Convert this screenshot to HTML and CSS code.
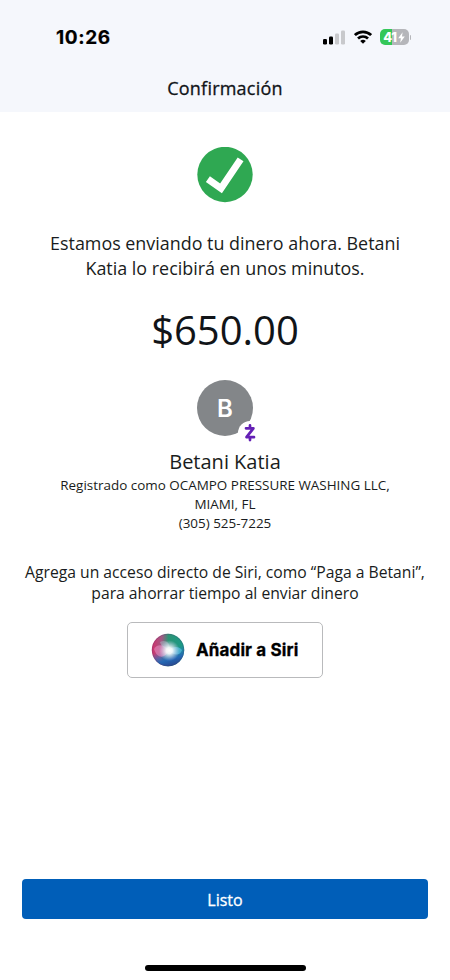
FILE: index.html
```html
<!DOCTYPE html>
<html lang="es">
<head>
<meta charset="utf-8">
<title>Confirmación</title>
<link rel="stylesheet" href="styles.css">
</head>
<body>
<div class="screen">
  <header class="top">
    <div class="status">
      <span class="time">10:26</span>
      <div class="indicators">
        <svg class="signal" width="22" height="15" viewBox="0 0 22 15">
          <rect x="0" y="9" width="4" height="5.5" rx="1.2" fill="#000"/>
          <rect x="6" y="6.5" width="4" height="8" rx="1.2" fill="#000"/>
          <rect x="12" y="3.5" width="4" height="11" rx="1.2" fill="#c8c9cc"/>
          <rect x="18" y="0.5" width="4" height="14" rx="1.2" fill="#c8c9cc"/>
        </svg>
        <svg class="wifi" width="18" height="14" viewBox="0 0 18 14">
          <g fill="none" stroke="#000" stroke-width="2.7">
            <path d="M0.9 5.1a11.6 11.6 0 0 1 16.2 0"/>
            <path d="M4 8.5a7.2 7.2 0 0 1 10 0"/>
          </g>
          <path d="M9 13.8 6.2 11a4 4 0 0 1 5.6 0z"/>
        </svg>
        <div class="battery">
          <span class="level">41</span>
          <svg width="7" height="11" viewBox="0 0 7 11"><path d="M4.6 0.3 0.2 6.2h2.7L2.2 10.7 6.8 4.6H4z" fill="#fff"/></svg>
        </div>
        <span class="cap"></span>
      </div>
    </div>
    <h1>Confirmación</h1>
  </header>
  <main>
    <svg class="check" width="56" height="56" viewBox="0 0 56 56">
      <circle cx="28" cy="27.5" r="27.7" fill="#2fa852"/>
      <path d="M10.9 32.2 24 41.4 43.6 12.4" fill="none" stroke="#fff" stroke-width="7"/>
    </svg>
    <p class="message">Estamos enviando tu dinero ahora. Betani<br>Katia lo recibirá en unos minutos.</p>
    <p class="amount">$650.00</p>
    <div class="avatar">B
      <span class="badge">
        <svg width="12" height="18" viewBox="0 0 12 18"><path d="M2 4.3h7.4L2.5 13.2H10M6 1.4v2.9M6 13.2v2.9" fill="none" stroke="#6420b5" stroke-width="2.7" stroke-linecap="round" stroke-linejoin="round"/></svg>
      </span>
    </div>
    <h2>Betani Katia</h2>
    <p class="details">Registrado como OCAMPO PRESSURE WASHING LLC,<br>MIAMI, FL<br>(305) 525-7225</p>
    <p class="hint">Agrega un acceso directo de Siri, como “Paga a Betani”,<br>para ahorrar tiempo al enviar dinero</p>
    <button class="siri">
      <svg width="34" height="34" viewBox="0 0 34 34">
        <defs>
          <linearGradient id="orb" x1="0" y1="0.35" x2="1" y2="0.4">
            <stop offset="0" stop-color="#d52f6b"/><stop offset="0.3" stop-color="#a05a84"/><stop offset="0.5" stop-color="#2c9474"/><stop offset="1" stop-color="#189b88"/>
          </linearGradient>
          <linearGradient id="base" x1="0.3" y1="0" x2="0.6" y2="1">
            <stop offset="0.5" stop-color="#2878ca" stop-opacity="0"/><stop offset="0.8" stop-color="#2468b4"/><stop offset="1" stop-color="#28488f"/>
          </linearGradient>
          <radialGradient id="glow" cx="0.54" cy="0.52" r="0.32">
            <stop offset="0" stop-color="#fff"/><stop offset="0.3" stop-color="#fff" stop-opacity="0.9"/><stop offset="1" stop-color="#dcd4ff" stop-opacity="0"/>
          </radialGradient>
        </defs>
        <circle cx="17" cy="17" r="16.2" fill="url(#orb)"/>
        <circle cx="17" cy="17" r="16.2" fill="url(#base)"/>
        <path d="M3 16C7 10 13 12 18 17 14 26 6 26 3 16z" fill="#e88cc0" opacity="0.6"/>
        <path d="M17 17c5-4 11-4 14 0-2 6-8 6-14 0z" fill="#61c9ed" opacity="0.6"/>
        <path d="M9 9c6-3 11 1 9 8-5-1-8-4-9-8z" fill="#a9b9c4" opacity="0.5"/>
        <circle cx="17" cy="17" r="16.2" fill="url(#glow)"/>
        <circle cx="17" cy="17" r="15.8" fill="none" stroke="#4c3f70" stroke-width="0.8" opacity="0.35"/>
      </svg>
      <span>Añadir a Siri</span>
    </button>
  </main>
  <footer>
    <button class="done">Listo</button>
    <div class="home"></div>
  </footer>
</div>
</body>
</html>
```

FILE: styles.css
```css
* { box-sizing: border-box; margin: 0; padding: 0; }
body { background: #fff; color: #191c20; font-family: "Open Sans", sans-serif; }
.screen { width: 450px; height: 980px; display: flex; flex-direction: column; overflow: hidden; }
.top { height: 112px; background: #f5f7fc; flex: none; }
.status { height: 74px; padding: 0 39px 0 56px; display: flex; align-items: center; justify-content: space-between; }
.time { padding-top: 1px; font: 700 19px/24px Inter, sans-serif; letter-spacing: 0.6px; color: #000; -webkit-text-stroke: 0.2px #000; }
.indicators { display: flex; align-items: center; }
.wifi { margin: 0 8px 0 9px; }
.battery { width: 29px; height: 16px; border-radius: 5px; background: linear-gradient(90deg, #34c759 0 12px, #b5b6ba 12px); display: flex; align-items: center; justify-content: center; gap: 1px; }
.level { font: 800 13px/16px Inter, sans-serif; color: #fff; letter-spacing: -0.2px; }
.cap { width: 1.5px; height: 5px; margin-left: 1px; border-radius: 0 2px 2px 0; background: #b5b6ba; }
h1 { font-size: 18px; line-height: 28px; font-weight: 400; letter-spacing: 0.22px; text-align: center; color: #111418; -webkit-text-stroke: 0.3px #111418; }
main { flex: 1; display: flex; flex-direction: column; align-items: center; text-align: center; padding-top: 35px; white-space: nowrap; }
.check { flex: none; }
.message { margin-top: 28px; font-size: 17.9px; line-height: 24.5px; }
.amount { margin-top: 22px; font-size: 40px; line-height: 56px; color: #111418; }
.avatar { position: relative; flex: none; width: 56px; height: 56px; margin-top: 22px; border-radius: 50%; background: #838689; color: #fff; font: 600 24px/58px Inter, sans-serif; }
.badge { position: absolute; left: 41px; top: 41px; width: 24px; height: 24px; border-radius: 50%; background: #fff; display: flex; align-items: center; justify-content: center; }
h2 { margin-top: 12px; font-size: 20px; line-height: 28px; font-weight: 400; }
.details { font-size: 13.45px; line-height: 19px; }
.hint { margin-top: 29px; font-size: 15.7px; line-height: 21px; }
.siri { margin-top: 18px; width: 196px; height: 56px; border: 1px solid #b9babc; border-radius: 5px; background: #fff; display: flex; align-items: center; padding-left: 23px; gap: 11px; font: 700 17px/24px Inter, sans-serif; letter-spacing: 0.13px; color: #000; -webkit-text-stroke: 0.3px #000; }
footer { flex: none; height: 101px; padding: 0 22px; display: flex; flex-direction: column; align-items: center; }
.done { width: 406px; height: 40px; border: 0; border-radius: 4px; background: #005eb8; color: #fff; font: 400 16px/42px "Open Sans", sans-serif; -webkit-text-stroke: 0.3px #fff; }
.home { width: 161px; height: 6px; margin-top: 46px; border-radius: 3px; background: #000; }
```
